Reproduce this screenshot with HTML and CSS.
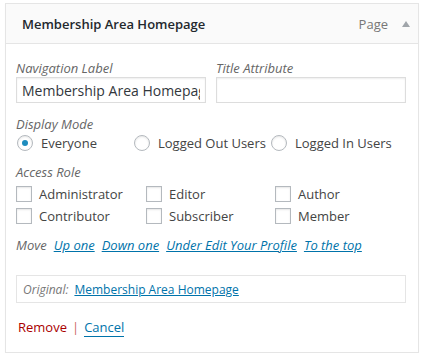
FILE: index.html
```html
<!DOCTYPE html>
<html>
<head>
<meta charset="utf-8">
<link rel="stylesheet" href="styles.css">
</head>
<body>
<div class="item">
  <div class="handle">
    <span class="item-title">Membership Area Homepage</span>
    <span class="controls"><span class="item-type">Page</span><span class="arrow"></span></span>
  </div>
  <div class="settings">
    <div class="row two">
      <label class="field">
        <span class="lbl">Navigation Label</span>
        <input class="text" type="text" value="Membership Area Homepage">
      </label>
      <label class="field">
        <span class="lbl">Title Attribute</span>
        <input class="text" type="text" value="">
      </label>
    </div>
    <div class="group">
      <div class="lbl">Display Mode</div>
      <div class="radios">
        <label class="opt r1"><span class="radio checked"></span>Everyone</label>
        <label class="opt r2"><span class="radio"></span>Logged Out Users</label>
        <label class="opt r3"><span class="radio"></span>Logged In Users</label>
      </div>
    </div>
    <div class="group group-roles">
      <div class="lbl">Access Role</div>
      <div class="checks">
        <label class="opt"><span class="check"></span>Administrator</label>
        <label class="opt"><span class="check"></span>Editor</label>
        <label class="opt"><span class="check"></span>Author</label>
        <label class="opt"><span class="check"></span>Contributor</label>
        <label class="opt"><span class="check"></span>Subscriber</label>
        <label class="opt"><span class="check"></span>Member</label>
      </div>
    </div>
    <div class="move">
      <span class="move-lbl">Move</span>
      <a href="#">Up one</a>
      <a href="#">Down one</a>
      <a href="#">Under Edit Your Profile</a>
      <a href="#">To the top</a>
    </div>
    <div class="original">
      <span class="orig-lbl">Original:</span>
      <a href="#">Membership Area Homepage</a>
    </div>
    <div class="actions">
      <a href="#" class="remove">Remove</a>
      <span class="sep">|</span>
      <a href="#" class="cancel">Cancel</a>
    </div>
  </div>
</div>
</body>
</html>
```
FILE: styles.css
```css
* { box-sizing: border-box; }
html, body { margin: 0; padding: 0; background: #fff; }
body {
  font-family: "Open Sans", "Liberation Sans", sans-serif;
  color: #444;
  font-size: 13px;
}
.item {
  margin: 3px 0 0 5px;
  width: 414px;
  height: 350px;
  border: 1px solid #e5e5e5;
  box-shadow: 0 1px 1px rgba(0,0,0,0.04);
}
.handle {
  height: 40px;
  background: #fafafa;
  border-bottom: 1px solid #e5e5e5;
  display: flex;
  align-items: center;
  justify-content: space-between;
  padding: 0 8px 0 16px;
}
.item-title {
  font-size: 13px;
  font-weight: 600;
  color: #23282d;
}
.controls { display: flex; align-items: center; }
.item-type { color: #777; font-size: 13px; }
.arrow {
  width: 0; height: 0;
  margin-left: 14px;
  border-left: 4px solid transparent;
  border-right: 4px solid transparent;
  border-bottom: 6px solid #a0a5aa;
}
.settings { padding: 15px 11px 0 10px; }
.lbl {
  font-style: italic;
  color: #666;
  font-size: 13px;
  line-height: 18px;
  display: block;
}
.two { display: flex; gap: 10px; }
.field { display: block; width: 190px; }
.text {
  display: block;
  width: 190px;
  height: 26px;
  margin: 0;
  border: 1px solid #ddd;
  box-shadow: inset 0 1px 2px rgba(0,0,0,0.07);
  padding: 0 5px;
  font-family: "Open Sans", sans-serif;
  font-size: 14px;
  color: #32373c;
  outline: none;
}
.group { margin-top: 12px; }
.group-roles { margin-top: 10px; }
.opt {
  display: flex;
  align-items: center;
  font-size: 13px;
  line-height: 16px;
  height: 16px;
  color: #444;
  white-space: nowrap;
}
.radios { display: flex; height: 20px; align-items: center; }
.r1 { width: 117px; }
.r2 { width: 137px; }
.radio {
  width: 16px; height: 16px;
  border: 1px solid #b4b9be;
  border-radius: 50%;
  margin: 0 8px 0 1px;
  box-shadow: inset 0 1px 2px rgba(0,0,0,0.1);
  display: flex; align-items: center; justify-content: center;
}
.radio.checked::after {
  content: "";
  width: 6px; height: 6px;
  border-radius: 50%;
  background: #1e8cbe;
}
.checks {
  display: grid;
  grid-template-columns: 130px 129px 1fr;
  row-gap: 6px;
  margin-top: 5px;
}
.check {
  width: 16px; height: 16px;
  border: 1px solid #b4b9be;
  box-shadow: inset 0 1px 2px rgba(0,0,0,0.1);
  margin-right: 7px;
}
.move {
  margin-top: 12px;
  font-style: italic;
  color: #666;
  font-size: 13px;
  line-height: 18px;
  display: flex;
  gap: 7px;
}
.move a, .original a { color: #0073aa; text-decoration: underline; }
.original {
  margin-top: 21px;
  border: 1px solid #e5e5e5;
  height: 28px;
  width: 390px;
  padding: 0 6px;
  display: flex;
  align-items: center;
  gap: 6px;
  font-size: 12px;
}
.orig-lbl { font-style: italic; color: #777; font-size: 12px; }
.actions {
  margin-top: 15px;
  font-size: 13px;
  line-height: 18px;
  display: flex;
  gap: 5px;
  padding-left: 2px;
}
.remove { color: #a00; text-decoration: none; }
.sep { color: #c66; }
.cancel { color: #0073aa; text-decoration: none; border-bottom: 1px solid #0073aa; }
```
